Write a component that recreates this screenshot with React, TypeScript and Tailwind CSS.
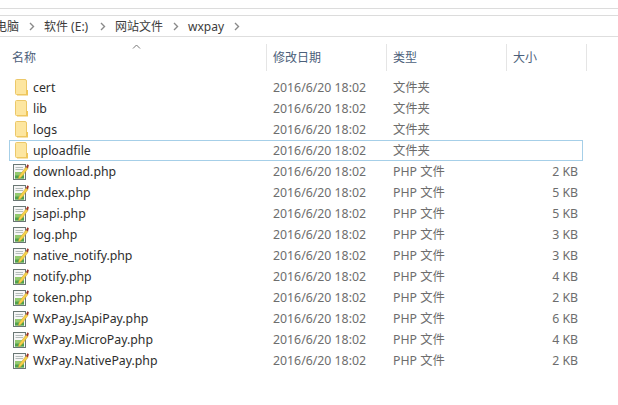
const FONT = "font-['Segoe_UI','Noto_Sans','Noto_Sans_CJK_SC',sans-serif]";

type Row = { name: string; folder?: boolean; size?: string; selected?: boolean };

const rows: Row[] = [
  { name: "cert", folder: true },
  { name: "lib", folder: true },
  { name: "logs", folder: true },
  { name: "uploadfile", folder: true, selected: true },
  { name: "download.php", size: "2 KB" },
  { name: "index.php", size: "5 KB" },
  { name: "jsapi.php", size: "5 KB" },
  { name: "log.php", size: "3 KB" },
  { name: "native_notify.php", size: "3 KB" },
  { name: "notify.php", size: "4 KB" },
  { name: "token.php", size: "2 KB" },
  { name: "WxPay.JsApiPay.php", size: "6 KB" },
  { name: "WxPay.MicroPay.php", size: "4 KB" },
  { name: "WxPay.NativePay.php", size: "2 KB" },
];

function FolderIcon() {
  return (
    <svg width="16" height="17" viewBox="0 0 16 17" className="shrink-0">
      <path d="M2.5 1.5 Q2.5 .5 3.5 .5 H12 Q13.5 .5 13.5 2 V15.5 H3.5 Q2.5 15.5 2.5 14.5 Z" fill="#fde6a0" stroke="#ecc869" strokeWidth="1" />
      <path d="M13 11 L15 11 V16.5 H4 V15.5 H13 Z" fill="#efc65a" />
    </svg>
  );
}

function PhpIcon() {
  return (
    <svg width="16" height="17" viewBox="0 0 16 17" className="shrink-0">
      <rect x="0.5" y="1.5" width="12" height="15" fill="#f6f6f6" stroke="#6a7774" />
      <path d="M2.5 4.5 H10 M2.5 6.5 H10" stroke="#b4bcba" />
      <rect x="2" y="9" width="9" height="6.5" fill="#93c96f" />
      <rect x="2" y="12.5" width="9" height="3" fill="#4fa04c" />
      <path d="M6 13 L13 4 L15 5.5 L8 14.5 L5.5 15.5 Z" fill="#f6d24a" stroke="#cf9f32" strokeWidth=".5" />
      <path d="M13 4 L14.5 1.2 L15.8 2.2 L15 5.5 Z" fill="#9c3326" />
    </svg>
  );
}

function Chevron() {
  return (
    <svg width="6" height="9" viewBox="0 0 6 9" className="shrink-0">
      <path d="M1 1 L4.5 4.5 L1 8" fill="none" stroke="#8a8a8a" strokeWidth="1.4" />
    </svg>
  );
}

function Head({ label, width, pad }: { label: string; width: string; pad: string }) {
  return (
    <div className={`${width} ${pad} h-[27px] flex items-center border-r border-[#e5e5e5] text-[#4c607a] shrink-0 text-[12px]`}>
      {label}
    </div>
  );
}

export default function App() {
  return (
    <div className={`${FONT} relative w-[618px] h-[405px] overflow-hidden bg-white text-[12.3px] leading-[21px]`}>
      <div className="h-[9px] border-b border-[#dcdcdc]" />
      <div className="h-[7px] border-b border-[#dcdcdc]" />
      <div className="h-[21px] border-b border-[#dedede] flex items-center text-[#3c3c3c] overflow-hidden text-[12px]">
        <span className="w-[19px] shrink-0 flex justify-end overflow-hidden whitespace-nowrap">电脑</span>
        <div className="ml-[10px] mr-[9px]"><Chevron /></div>
        <span className="w-[46px] whitespace-nowrap">软件 (E:)</span>
        <div className="ml-[10px] mr-[9px]"><Chevron /></div>
        <span>网站文件</span>
        <div className="ml-[10px] mr-[9px]"><Chevron /></div>
        <span>wxpay</span>
        <div className="ml-[10px]"><Chevron /></div>
      </div>
      <div className="flex mt-[7px] relative">
        <Head label="名称" width="w-[267px]" pad="pl-[12px]" />
        <Head label="修改日期" width="w-[120px]" pad="pl-[6px]" />
        <Head label="类型" width="w-[120px]" pad="pl-[6px]" />
        <Head label="大小" width="w-[80px]" pad="pl-[6px]" />
        <svg width="9" height="5" viewBox="0 0 9 5" className="absolute left-[132px] top-0">
          <path d="M1 4.5 L4.5 1 L8 4.5" fill="none" stroke="#777" />
        </svg>
      </div>
      <div className="mt-[6px] flex flex-col">
        {rows.map((r) => (
          <div
            key={r.name}
            className={`ml-[9px] w-[574px] h-[21px] flex items-center border ${
              r.selected ? "border-[#a6cfe8]" : "border-transparent"
            }`}
          >
            <div className="w-[23px] pl-[4px] flex shrink-0"><div className="-ml-[1px]">{r.folder ? <FolderIcon /> : <PhpIcon />}</div></div>
            <div className="w-[240px] shrink-0 text-[#2e2e2e] whitespace-nowrap">{r.name}</div>
            <div className="w-[120px] shrink-0 text-[#6d6d6d] whitespace-nowrap">2016/6/20 18:02</div>
            <div className="w-[70px] shrink-0 text-[#6d6d6d] whitespace-nowrap">{r.folder ? "文件夹" : "PHP 文件"}</div>
            <div className="w-[115px] shrink-0 text-right text-[#6d6d6d] whitespace-nowrap">{r.size}</div>
          </div>
        ))}
      </div>
    </div>
  );
}
